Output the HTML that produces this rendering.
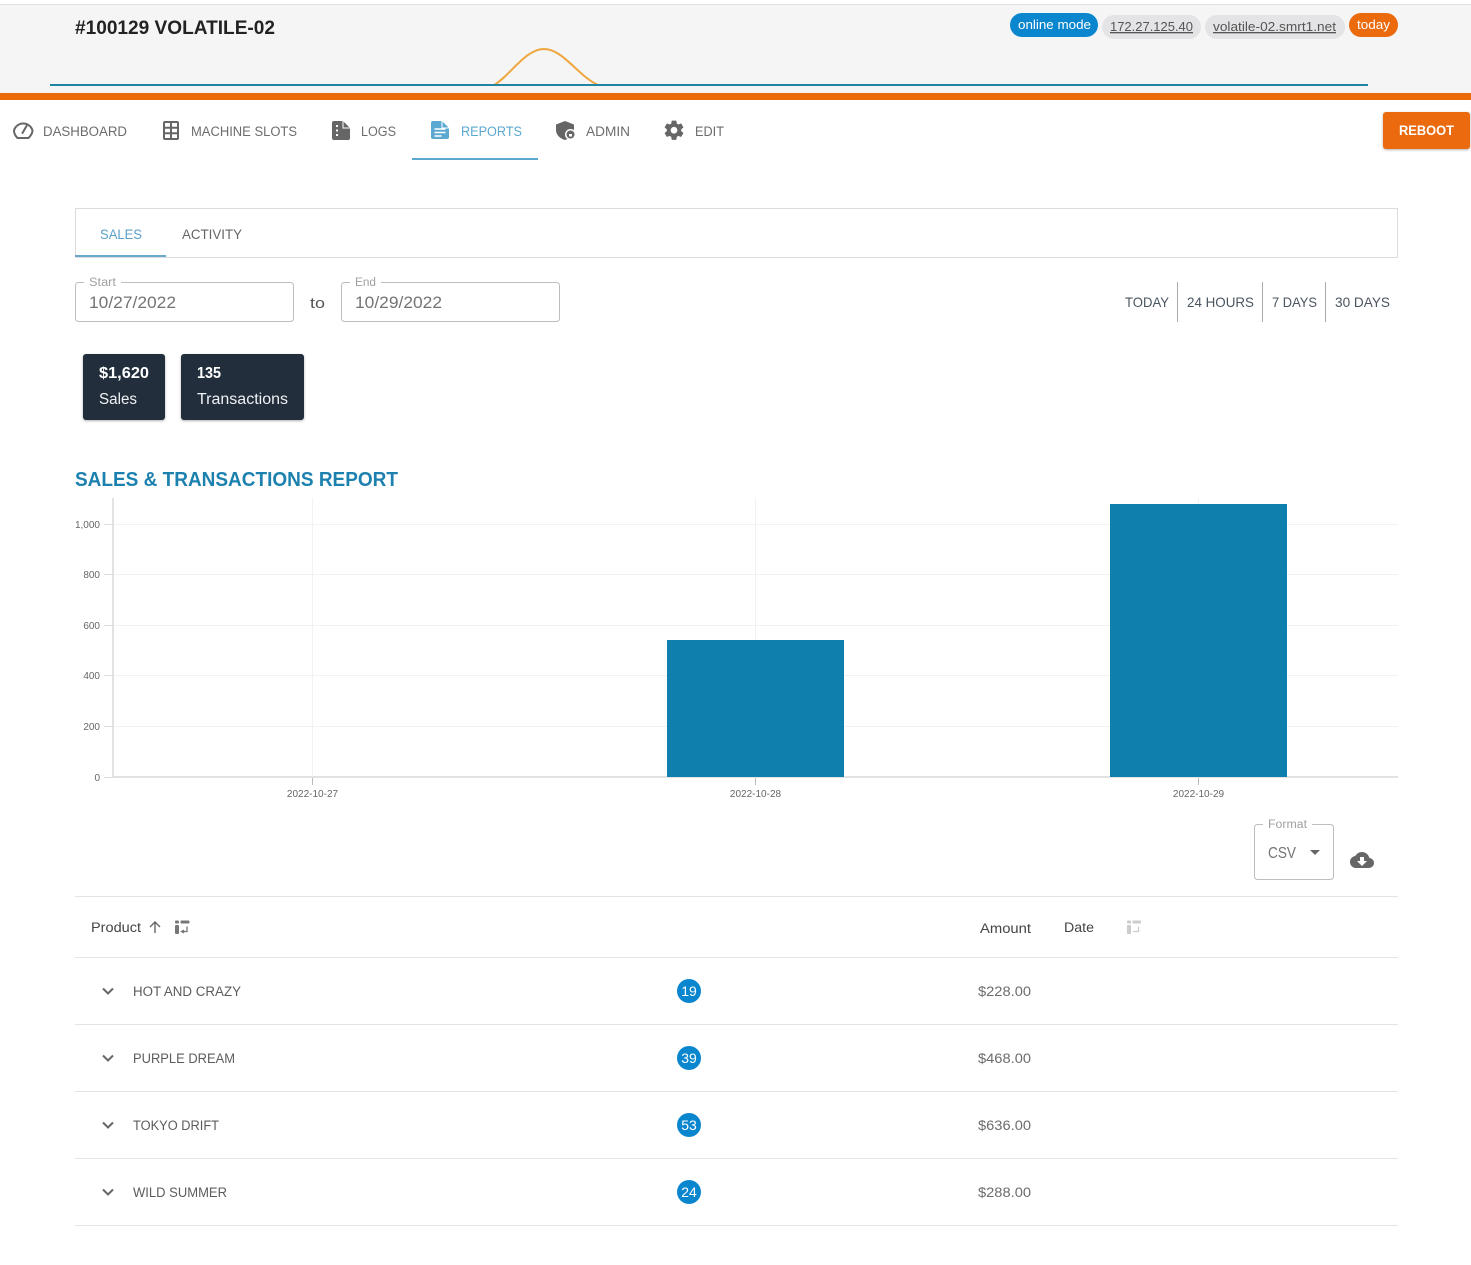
<!DOCTYPE html>
<html lang="en"><head><meta charset="utf-8"><title>#100129 VOLATILE-02 Reports</title>
<style>
html,body{margin:0;padding:0;background:#fff;width:1471px;height:1265px;overflow:hidden}
svg{display:block;font-family:"Liberation Sans",sans-serif}
text{white-space:pre}
.nav{font-size:13.5px;fill:#6c6c6c}
.tick{font-size:10px;fill:#666}
.rng{font-size:14px;fill:#4a5560}
.row{font-size:13.5px;fill:#5c5c5c}
.amt{font-size:14px;fill:#6c6c6c}
.num{font-size:14px;fill:#fff}
.lab{font-size:11.5px;fill:#a0a0a0}
.val{font-size:16.5px;fill:#747474}
.g{stroke:#f2f2f2;stroke-width:1}
.t{stroke:#ddd;stroke-width:1}
.l{stroke:#e4e4e4;stroke-width:1}
</style></head><body>
<svg width="1471" height="1265" viewBox="0 0 1471 1265" xmlns="http://www.w3.org/2000/svg">
<defs><filter id="s" x="-10%" y="-10%" width="120%" height="130%"><feDropShadow dx="0" dy="1" stdDeviation="1.2" flood-color="#000" flood-opacity=".3"/></filter></defs>
<!-- header -->
<rect x="0" y="5" width="1471" height="88" fill="#f5f5f5"/>
<rect x="0" y="4" width="1471" height="1" fill="#e2e2e2"/>
<text x="75" y="34" font-size="19" font-weight="700" fill="#222" textLength="200" lengthAdjust="spacingAndGlyphs">#100129 VOLATILE-02</text>
<path d="M494 85C510 76 525 49 544 49C563 49 578 76 598 85" fill="none" stroke="#eea63f" stroke-width="2"/>
<rect x="50" y="84" width="1318" height="2" fill="#1f85a3"/>
<rect x="0" y="93" width="1471" height="7" fill="#ea6a0c"/>
<rect x="1010" y="13" width="88" height="24" rx="12" fill="#0a86cf"/>
<text x="1018" y="29" font-size="13" fill="#fff" textLength="73" lengthAdjust="spacingAndGlyphs">online mode</text>
<rect x="1102" y="15" width="99" height="24" rx="12" fill="#e4e4e6"/>
<text x="1110" y="31" font-size="13" fill="#555" text-decoration="underline" textLength="83" lengthAdjust="spacingAndGlyphs">172.27.125.40</text>
<rect x="1205" y="15" width="140" height="24" rx="12" fill="#e4e4e6"/>
<text x="1213" y="31" font-size="13" fill="#555" text-decoration="underline" textLength="123" lengthAdjust="spacingAndGlyphs">volatile-02.smrt1.net</text>
<rect x="1349" y="13" width="49" height="24" rx="12" fill="#ea6a0c"/>
<text x="1357" y="29" font-size="13" fill="#fff" textLength="33" lengthAdjust="spacingAndGlyphs">today</text>
<!-- nav icons -->
<g fill="none" stroke="#666" stroke-width="2"><path d="M17.500 138H28.500C31 135.500 32.500 133.500 32.500 130.500A9.500 9 0 0 0 14 130.500C14 133.500 15 135.500 17.500 138Z" stroke-linejoin="round"/><path d="M22.500 133L26.500 126" stroke-linecap="round"/></g>
<g fill="none" stroke="#666" stroke-width="2"><rect x="164" y="122" width="14" height="17" rx="1"/><path d="M171 122V139M164 127.700H178M164 133.300H178"/></g>
<path fill="#666" d="M334 121H343L350 128V138A2 2 0 0 1 348 140H334A2 2 0 0 1 332 138V123A2 2 0 0 1 334 121Z"/>
<path d="M343 121V128H350" fill="none" stroke="#fff" stroke-width="1"/>
<rect x="336" y="125" width="2" height="2" fill="#fff"/><rect x="336" y="129.500" width="2" height="2" fill="#fff"/><rect x="336" y="134" width="2" height="2" fill="#fff"/>
<path fill="#5ba8d0" d="M433 121H442L449 128V137A2 2 0 0 1 447 139H433A2 2 0 0 1 431 137V123A2 2 0 0 1 433 121Z"/>
<path d="M442 121V128H449" fill="none" stroke="#fff" stroke-width="1"/>
<path stroke="#fff" stroke-width="1.600" d="M434.500 129H445.500M434.500 132.500H445.500M434.500 136H441.500"/>
<path fill="#666" d="M565 121L574 124.500V130C574 135 570 138.500 565 140C560 138.500 556 135 556 130V124.500Z"/>
<circle cx="570.500" cy="134.500" r="5.500" fill="#fff"/><circle cx="570.500" cy="134.500" r="4" fill="#666"/><rect x="569" y="134" width="3" height="2.500" fill="#fff"/>
<g transform="translate(662.500 118.700) scale(.96)"><path fill="#666" d="M12,15.5A3.5,3.5 0 0,1 8.5,12A3.5,3.5 0 0,1 12,8.5A3.5,3.5 0 0,1 15.5,12A3.5,3.5 0 0,1 12,15.5M19.43,12.97C19.47,12.65 19.5,12.33 19.5,12C19.5,11.67 19.47,11.34 19.43,11L21.54,9.37C21.73,9.22 21.78,8.95 21.66,8.73L19.66,5.27C19.54,5.05 19.27,4.96 19.05,5.05L16.56,6.05C16.04,5.66 15.5,5.32 14.87,5.07L14.5,2.42C14.46,2.18 14.25,2 14,2H10C9.75,2 9.54,2.18 9.5,2.42L9.13,5.07C8.5,5.32 7.96,5.66 7.44,6.05L4.95,5.05C4.73,4.96 4.46,5.05 4.34,5.27L2.34,8.73C2.21,8.95 2.27,9.22 2.46,9.37L4.57,11C4.53,11.34 4.5,11.67 4.5,12C4.5,12.33 4.53,12.65 4.57,12.97L2.46,14.63C2.27,14.78 2.21,15.05 2.34,15.27L4.34,18.73C4.46,18.95 4.73,19.03 4.95,18.95L7.44,17.94C7.96,18.34 8.5,18.68 9.13,18.93L9.5,21.58C9.54,21.82 9.75,22 10,22H14C14.25,22 14.46,21.82 14.5,21.58L14.87,18.93C15.5,18.67 16.04,18.34 16.56,17.94L19.05,18.95C19.27,19.03 19.54,18.95 19.66,18.73L21.66,15.27C21.78,15.05 21.73,14.78 21.54,14.63L19.43,12.97Z"/></g>
<!-- nav -->
<text class="nav" x="43" y="136" textLength="84" lengthAdjust="spacingAndGlyphs">DASHBOARD</text>
<text class="nav" x="191" y="136" textLength="106" lengthAdjust="spacingAndGlyphs">MACHINE SLOTS</text>
<text class="nav" x="361" y="136" textLength="35" lengthAdjust="spacingAndGlyphs">LOGS</text>
<text class="nav" x="461" y="136" style="fill:#5ba8d0" textLength="61" lengthAdjust="spacingAndGlyphs">REPORTS</text>
<text class="nav" x="586" y="136" textLength="44" lengthAdjust="spacingAndGlyphs">ADMIN</text>
<text class="nav" x="695" y="136" textLength="29" lengthAdjust="spacingAndGlyphs">EDIT</text>
<rect x="412" y="158" width="126" height="2" fill="#5ba8d0"/>
<rect x="1383" y="112" width="87" height="37" rx="3" fill="#ea6a0c" filter="url(#s)"/>
<text x="1399" y="135" font-size="13.5" font-weight="700" fill="#fff" textLength="55" lengthAdjust="spacingAndGlyphs">REBOOT</text>
<!-- tabs -->
<rect x="75.500" y="208.500" width="1322" height="49" fill="#fff" stroke="#dcdcdc"/>
<rect x="75" y="255" width="91" height="2" fill="#6aa8cf"/>
<text x="100" y="239" font-size="14" fill="#5ba0c8" textLength="42" lengthAdjust="spacingAndGlyphs">SALES</text>
<text x="182" y="239" font-size="14" fill="#666" textLength="60" lengthAdjust="spacingAndGlyphs">ACTIVITY</text>
<!-- date inputs -->
<rect x="75.500" y="282.500" width="218" height="39" rx="3" fill="#fff" stroke="#bdbdbd"/>
<rect x="84" y="280" width="37" height="5" fill="#fff"/>
<text class="lab" x="89" y="286" textLength="27" lengthAdjust="spacingAndGlyphs">Start</text>
<text class="val" x="89" y="308" textLength="87" lengthAdjust="spacingAndGlyphs">10/27/2022</text>
<text x="310" y="308" font-size="15" fill="#555" textLength="15" lengthAdjust="spacingAndGlyphs">to</text>
<rect x="341.500" y="282.500" width="218" height="39" rx="3" fill="#fff" stroke="#bdbdbd"/>
<rect x="350" y="280" width="31" height="5" fill="#fff"/>
<text class="lab" x="355" y="286" textLength="21" lengthAdjust="spacingAndGlyphs">End</text>
<text class="val" x="355" y="308" textLength="87" lengthAdjust="spacingAndGlyphs">10/29/2022</text>
<!-- ranges -->
<text class="rng" x="1125" y="307" textLength="44" lengthAdjust="spacingAndGlyphs">TODAY</text>
<text class="rng" x="1187" y="307" textLength="67" lengthAdjust="spacingAndGlyphs">24 HOURS</text>
<text class="rng" x="1272" y="307" textLength="45" lengthAdjust="spacingAndGlyphs">7 DAYS</text>
<text class="rng" x="1335" y="307" textLength="55" lengthAdjust="spacingAndGlyphs">30 DAYS</text>
<path stroke="#aaa" d="M1177.500 282V322M1262.500 282V322M1325.500 282V322"/>
<!-- stat cards -->
<rect x="83" y="354" width="82" height="66" rx="3" fill="#212f3a" filter="url(#s)"/>
<rect x="181" y="354" width="123" height="66" rx="3" fill="#212f3a" filter="url(#s)"/>
<text x="99" y="378" font-size="16" font-weight="700" fill="#fff" textLength="50" lengthAdjust="spacingAndGlyphs">$1,620</text>
<text x="99" y="404" font-size="15.500" fill="#eef1f3" textLength="38" lengthAdjust="spacingAndGlyphs">Sales</text>
<text x="197" y="378" font-size="16" font-weight="700" fill="#fff" textLength="24" lengthAdjust="spacingAndGlyphs">135</text>
<text x="197" y="404" font-size="15.500" fill="#eef1f3" textLength="91" lengthAdjust="spacingAndGlyphs">Transactions</text>
<text x="75" y="486" font-size="20" font-weight="700" fill="#1c81ae" textLength="323" lengthAdjust="spacingAndGlyphs">SALES &amp; TRANSACTIONS REPORT</text>
<!-- chart -->
<path class="g" d="M114 524.500H1398M114 574.500H1398M114 625.500H1398M114 675.500H1398M114 726.500H1398M312.500 498V777M755.500 498V777M1198.500 498V777"/>
<path stroke="#e2e2e2" stroke-width="2" fill="none" d="M113 498V778M113 777H1398"/>
<rect x="667" y="640" width="177" height="137" fill="#0f80ae"/>
<rect x="1110" y="504" width="177" height="273" fill="#0f80ae"/>
<path class="t" d="M104 524.500H113M104 574.500H113M104 625.500H113M104 675.500H113M104 726.500H113M104 777.500H113"/>
<path stroke="#bbb" d="M312.500 778V785M755.500 778V785M1198.500 778V785"/>
<g class="tick" text-anchor="end">
<text class="tick" x="100" y="528">1,000</text><text class="tick" x="100" y="578">800</text><text class="tick" x="100" y="629">600</text><text class="tick" x="100" y="679">400</text><text class="tick" x="100" y="730">200</text><text class="tick" x="100" y="781">0</text></g>
<text class="tick" x="312.500" y="797" text-anchor="middle">2022-10-27</text>
<text class="tick" x="755.500" y="797" text-anchor="middle">2022-10-28</text>
<text class="tick" x="1198.500" y="797" text-anchor="middle">2022-10-29</text>
<!-- format -->
<rect x="1254.500" y="824.500" width="79" height="55" rx="3" fill="#fff" stroke="#bdbdbd"/>
<rect x="1263" y="822" width="49" height="5" fill="#fff"/>
<text class="lab" x="1268" y="828" textLength="39" lengthAdjust="spacingAndGlyphs">Format</text>
<text x="1268" y="858" font-size="16" fill="#747474" textLength="28" lengthAdjust="spacingAndGlyphs">CSV</text>
<path d="M1310 850H1320L1315 855Z" fill="#666"/>
<g transform="translate(1350 848)"><path fill="#666" d="M17,13L12,18L7,13H10V9H14V13M19.35,10.03C18.67,6.59 15.64,4 12,4C9.11,4 6.6,5.64 5.35,8.03C2.34,8.36 0,10.9 0,14A6,6 0 0,0 6,20H19A5,5 0 0,0 24,15C24,12.36 21.95,10.22 19.35,10.03Z"/></g>
<!-- table -->
<path class="l" d="M75 896.500H1398M75 957.500H1398M75 1024.500H1398M75 1091.500H1398M75 1158.500H1398M75 1225.500H1398"/>
<text x="91" y="932" font-size="13.500" fill="#444" textLength="50" lengthAdjust="spacingAndGlyphs">Product</text>
<path d="M155 933V922.500M150 927L155 922L160 927" fill="none" stroke="#666" stroke-width="1.400"/>
<g fill="#777"><rect x="175" y="920.500" width="4" height="3" rx="1"/><rect x="180.500" y="920.500" width="9" height="3" rx="1"/><rect x="175" y="925" width="4" height="9" rx="1"/></g>
<path d="M181 931.500H187V926.500M184 933L181.500 931.500L184 930" fill="none" stroke="#777" stroke-width="1.300"/>
<text x="980" y="933" font-size="13.500" fill="#444" textLength="51" lengthAdjust="spacingAndGlyphs">Amount</text>
<text x="1064" y="932" font-size="13.500" fill="#444" textLength="30" lengthAdjust="spacingAndGlyphs">Date</text>
<g fill="#ccc"><rect x="1127" y="920.500" width="4" height="3" rx="1"/><rect x="1132.500" y="920.500" width="8.500" height="3" rx="1"/><rect x="1127" y="925" width="4" height="9" rx="1"/></g>
<path d="M1133 931.500H1138.500V926.500" fill="none" stroke="#ccc" stroke-width="1.300"/>
<path d="M103 988.500L108 993.500L113 988.500M103 1055.500L108 1060.500L113 1055.500M103 1122.500L108 1127.500L113 1122.500M103 1189.500L108 1194.500L113 1189.500" fill="none" stroke="#666" stroke-width="2"/>
<text class="row" x="133" y="996" textLength="108" lengthAdjust="spacingAndGlyphs">HOT AND CRAZY</text>
<text class="row" x="133" y="1063" textLength="102" lengthAdjust="spacingAndGlyphs">PURPLE DREAM</text>
<text class="row" x="133" y="1130" textLength="86" lengthAdjust="spacingAndGlyphs">TOKYO DRIFT</text>
<text class="row" x="133" y="1197" textLength="94" lengthAdjust="spacingAndGlyphs">WILD SUMMER</text>
<g fill="#0a86cf"><circle cx="689" cy="991" r="12"/><circle cx="689" cy="1058" r="12"/><circle cx="689" cy="1125" r="12"/><circle cx="689" cy="1192" r="12"/></g>
<text class="num" x="689" y="996" text-anchor="middle">19</text>
<text class="num" x="689" y="1063" text-anchor="middle">39</text>
<text class="num" x="689" y="1130" text-anchor="middle">53</text>
<text class="num" x="689" y="1197" text-anchor="middle">24</text>
<text class="amt" x="978" y="996" textLength="53" lengthAdjust="spacingAndGlyphs">$228.00</text>
<text class="amt" x="978" y="1063" textLength="53" lengthAdjust="spacingAndGlyphs">$468.00</text>
<text class="amt" x="978" y="1130" textLength="53" lengthAdjust="spacingAndGlyphs">$636.00</text>
<text class="amt" x="978" y="1197" textLength="53" lengthAdjust="spacingAndGlyphs">$288.00</text>
</svg>
</body></html>
